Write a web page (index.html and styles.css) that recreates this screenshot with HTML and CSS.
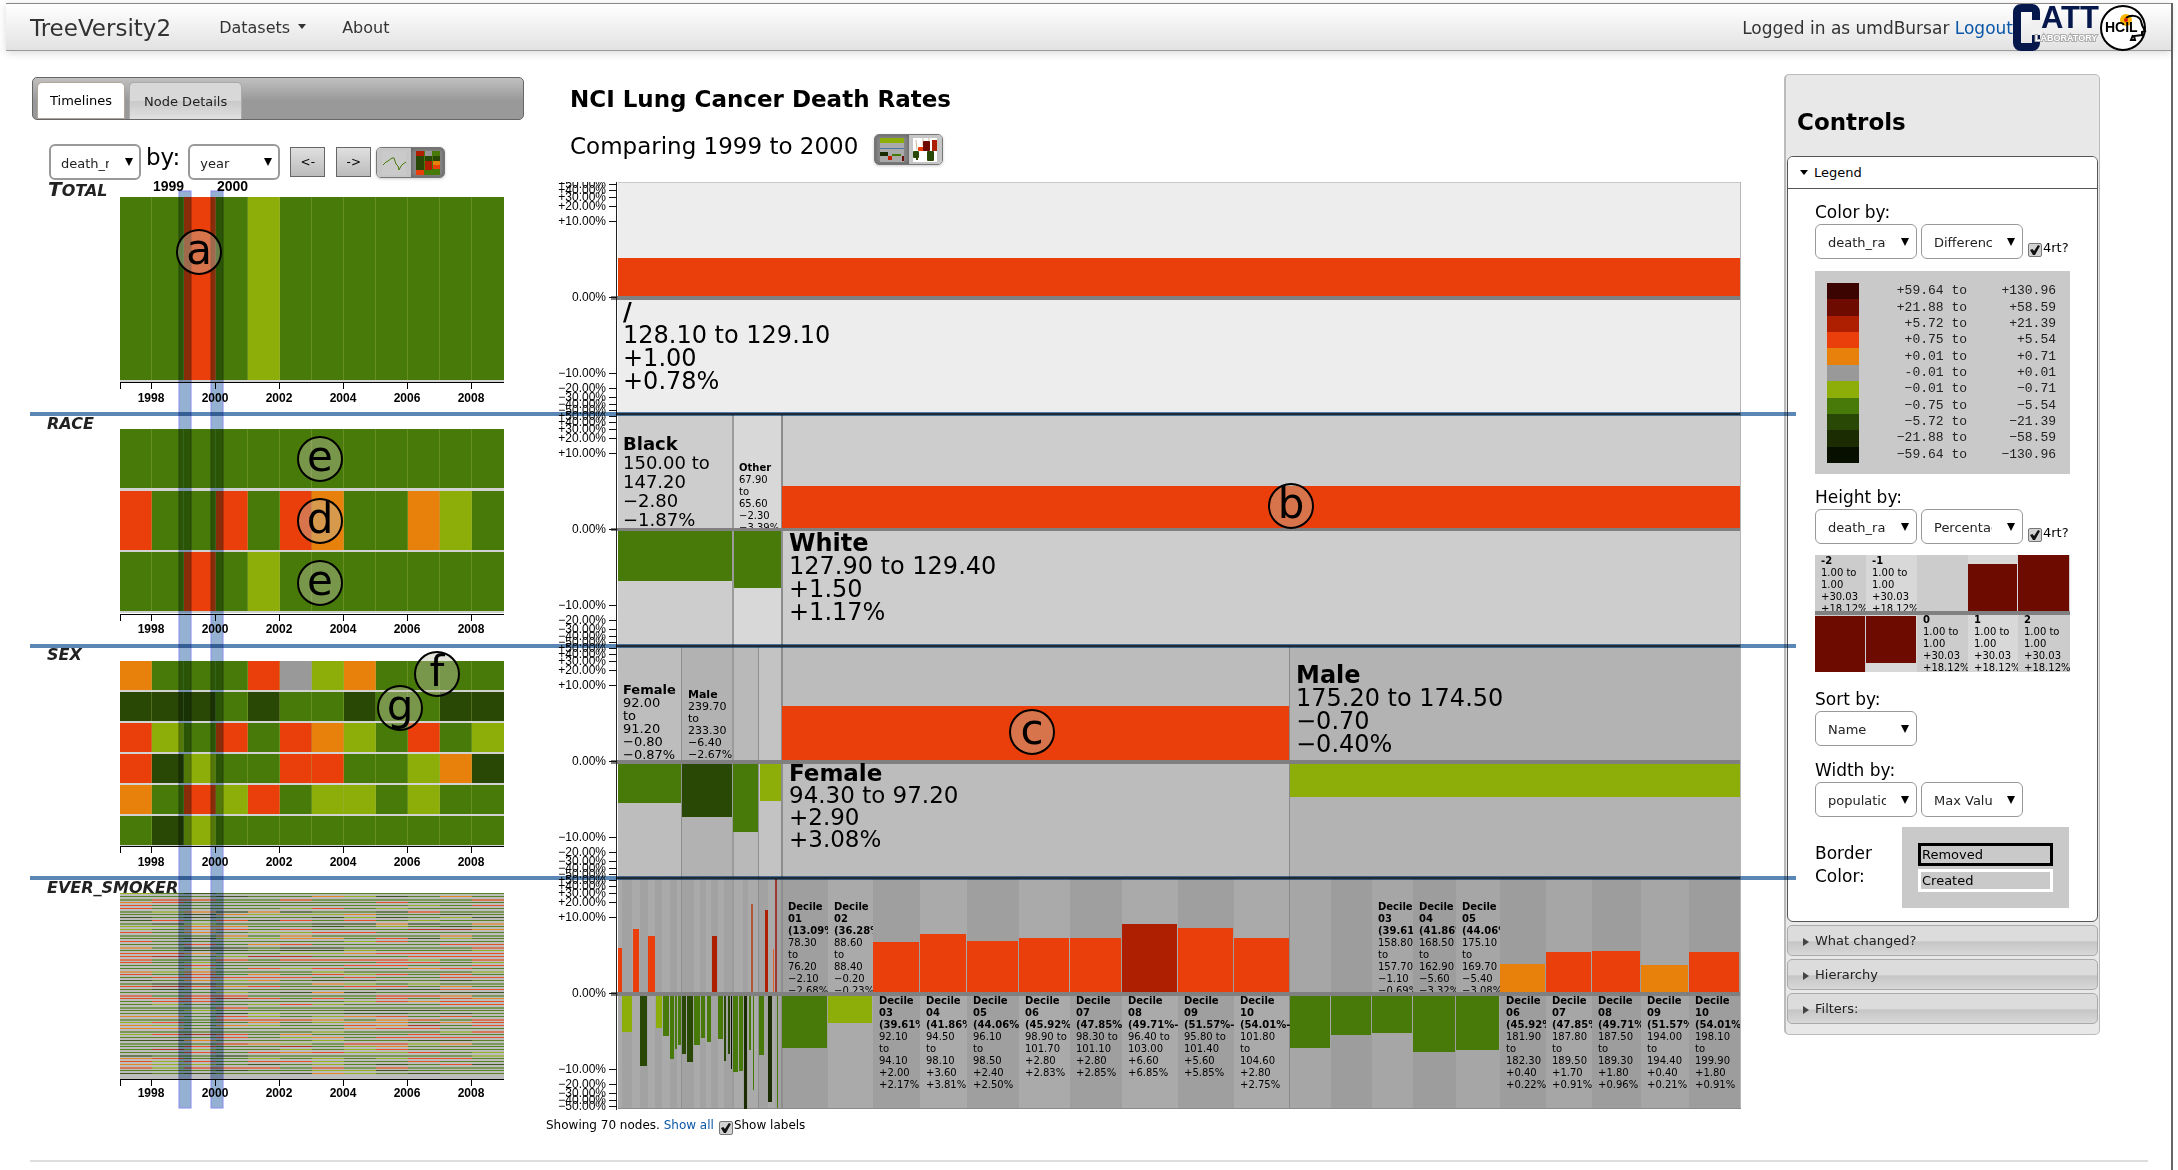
FILE: index.html
```html
<!DOCTYPE html>
<html lang="en">
<head>
<meta charset="utf-8">
<title>TreeVersity2</title>
<link rel="stylesheet" href="styles.css">
</head>
<body>
<div class="page">
  <header class="navbar">
    <a class="brand" href="#">TreeVersity2</a>
    <nav class="nav">
      <a class="nav-link has-caret" href="#">Datasets</a>
      <a class="nav-link" href="#">About</a>
    </nav>
    <p class="session">Logged in as umdBursar <a href="#">Logout</a></p>
    <svg class="logos" width="135" height="48" viewBox="2014 4 135 48" role="img" aria-label="CATT Laboratory and HCIL">
      <rect x="2018" y="8" width="19" height="39" rx="4" fill="none" stroke="#06174c" stroke-width="8"/>
      <rect x="2032" y="20" width="10" height="15" fill="#f0f0f0"/>
      <text class="catt" x="2042" y="28">ATT</text>
      <text class="lab" x="2036" y="41">LABORATORY</text>
      <circle cx="2124" cy="28" r="22" fill="#fff" stroke="#000" stroke-width="2"/>
      <circle cx="2127" cy="20" r="6" fill="#f9b700"/>
      <path d="M2127 18c4-3 11-3 14 1 2 3 1 5 3 8l2 4-3 1v3l-8 1 1 4h-4l2-5" fill="none" stroke="#000" stroke-width="2"/>
      <text class="hcil" x="2106" y="32">HCIL</text>
      <circle cx="2127" cy="20" r="2" fill="#e01a00"/>
    </svg>
  </header>

  <main class="workspace">
    <section class="timelines">
      <div class="tabs">
        <button class="tab is-active" type="button">Timelines</button>
        <button class="tab" type="button">Node Details</button>
      </div>
      <div class="tools">
        <span class="pick pick-92"><select id="measure" aria-label="Measure"><option>death_rate</option></select></span>
        <label class="by" for="period">by:</label>
        <span class="pick pick-92"><select id="period"><option>year</option></select></span>
        <button class="step" type="button">&lt;-</button>
        <button class="step" type="button">-&gt;</button>
        <div class="toggle">
          <button type="button" aria-label="Line view">
            <svg width="24" height="24" viewBox="0 0 24 24"><rect width="24" height="24" fill="#cacaca"/><path d="M1 14l3-3 2-1 4-3h2l2 6 2 2 1 4 2-4 2-2 3-2" fill="none" stroke="#477a08" stroke-width="1"/></svg>
          </button>
          <button class="is-on" type="button" aria-label="Heat map view">
            <svg width="24" height="24" viewBox="0 0 24 24"><rect width="24" height="24" fill="#477a08"/><path d="M0 0h8v5H0zM9 10h7v9H9z" fill="#ae1f02"/><path d="M9 0h7v5H9z" fill="#999"/><path d="M0 5h8v14H0zM9 5h7v5H9zM17 5h7v5h-7z" fill="#294705"/><path d="M17 10h7v4h-7z" fill="#e8800c"/><path d="M17 14h7v4h-7zM0 19h8v5H0z" fill="#ea3f0a"/></svg>
          </button>
        </div>
      </div>
      <svg id="heat" class="chart" viewBox="32 180 492 930" role="img" aria-label="Timelines by group"></svg>
    </section>

    <section class="tree">
      <h1>NCI Lung Cancer Death Rates</h1>
      <div class="compare">
        <h2>Comparing 1999 to 2000</h2>
        <div class="toggle">
          <button class="is-on" type="button" aria-label="Icicle view">
            <svg width="24" height="24" viewBox="0 0 24 24"><rect width="24" height="24" fill="#aaa"/><rect width="24" height="5" fill="#8dae08"/><rect y="10" width="24" height="1" fill="#4a77a8"/><rect y="14" width="8" height="4" fill="#1b2b02"/><rect x="8" y="18" width="4" height="4" fill="#c02000"/><rect x="12" y="16" width="9" height="2" fill="#477a08"/><rect x="22" y="18" width="2" height="5" fill="#6e0b00"/></svg>
          </button>
          <button type="button" aria-label="Bar view">
            <svg width="24" height="24" viewBox="0 0 24 24"><rect width="24" height="24" fill="#fff"/><path d="M3 2l1 10M10 0v8M16 14V0" stroke="#c7bc9a" fill="none"/><rect x="5" y="9" width="7" height="4" rx="1" fill="#ea3f0a"/><rect x="10" y="3" width="7" height="10" rx="1" fill="#6e0b00"/><rect x="19" y="2" width="5" height="11" fill="#ae1f02"/><rect y="13" width="6" height="7" rx="1" fill="#294705"/><rect x="3" y="18" width="2" height="4" fill="#294705"/><rect x="14" y="13" width="7" height="10" rx="1" fill="#294705"/></svg>
          </button>
        </div>
      </div>
      <svg id="icicle" class="chart" viewBox="546 182 1195 928" role="img" aria-label="Change per node"></svg>
      <p class="summary">Showing 70 nodes. <a href="#">Show all</a><input id="labels" type="checkbox" checked><label for="labels">Show labels</label></p>
    </section>

    <aside class="controls">
      <h2>Controls</h2>
      <section class="legend">
        <button class="legend-head" type="button">Legend</button>
        <div class="legend-body">
          <label class="caption" for="color-by">Color by:</label>
          <div class="row">
            <span class="pick"><select id="color-by"><option>death_rate</option></select></span>
            <span class="pick"><select aria-label="Color mode"><option>Difference</option></select></span>
            <input id="rt1" type="checkbox" checked><label class="rt" for="rt1">4rt?</label>
          </div>
          <div class="scale-box"><table class="scale"><tbody id="scale"></tbody></table></div>
          <label class="caption" for="height-by">Height by:</label>
          <div class="row">
            <span class="pick"><select id="height-by"><option>death_rate</option></select></span>
            <span class="pick"><select aria-label="Height mode"><option>Percentage</option></select></span>
            <input id="rt2" type="checkbox" checked><label class="rt" for="rt2">4rt?</label>
          </div>
          <svg id="sample" class="sample" width="255" height="117" viewBox="1815 556 255 117"></svg>
          <label class="caption" for="sort-by">Sort by:</label>
          <div class="row">
            <span class="pick"><select id="sort-by"><option>Name</option></select></span>
          </div>
          <label class="caption width-by" for="width-by">Width by:</label>
          <div class="row">
            <span class="pick"><select id="width-by"><option>population</option></select></span>
            <span class="pick"><select aria-label="Width mode"><option>Max Value</option></select></span>
          </div>
          <div class="border-row">
            <p>Border Color:</p>
            <div class="border-box"><div class="removed">Removed</div><div class="created">Created</div></div>
          </div>
        </div>
      </section>
      <button class="fold" type="button">What changed?</button>
      <button class="fold" type="button">Hierarchy</button>
      <button class="fold" type="button">Filters:</button>
    </aside>

    <div class="guide guide-1"></div>
    <div class="guide guide-2"></div>
    <div class="guide guide-3"></div>
  </main>
  <hr class="rule">
</div>
<script src="charts.js"></script>
</body>
</html>
```
FILE: styles.css
```css
* { box-sizing: border-box; }
body { margin: 0; background: #fff; color: #000; font-family: "DejaVu Sans", Verdana, sans-serif; font-size: 13px; }
h1, h2, p { margin: 0; }
a { color: #0b57a8; text-decoration: none; }
button { font: inherit; color: inherit; margin: 0; padding: 0; }
.page { margin: 3px 5px 0 6px; border-right: 2px solid #666; min-height: 1167px; }

.navbar { display: flex; align-items: flex-start; height: 48px; padding: 0 23px 0 24px; border-top: 1px solid #8b8782; border-bottom: 1px solid #999; background: linear-gradient(#fff, #e2e2e2); box-shadow: 0 2px 8px rgba(0,0,0,.15); }
.brand { color: #333; font-size: 23px; line-height: 48px; }
.nav { display: flex; gap: 36px; margin-left: 48px; }
.nav-link { color: #333; font-size: 16px; line-height: 48px; }
.has-caret::after { content: ""; display: inline-block; margin-left: 8px; vertical-align: 4px; border: 4px solid transparent; border-top: 5px solid #333; border-bottom: 0; }
.session { margin-left: auto; color: #333; font-size: 17px; line-height: 48px; }
.logos { display: block; flex: none; }

.workspace { position: relative; display: grid; grid-template-columns: 492px minmax(0, 1fr) 316px; align-items: start; padding: 0 71px 0 26px; }
.chart { display: block; width: 100%; height: auto; overflow: visible; }

.tabs { display: flex; gap: 4px; margin-top: 26px; height: 43px; padding: 4px 4px 0; border: 1px solid #666; border-radius: 5px; background: linear-gradient(#c0c0c0, #999 55%, #999); }
.tab { border: 1px solid #aaa; border-bottom: 0; border-radius: 5px 5px 0 0; background: linear-gradient(#d8d8d8 50%, #c9c9c9 50%, #e0e0e0); color: #222; padding: 0 14px; }
.tab.is-active { background: #fff; color: #000; border: 1px solid #b0a59a; padding: 0 12px; }
.tools { display: flex; align-items: flex-start; height: 36px; margin-top: 24px; padding-left: 17px; }
.by { font-size: 23px; line-height: 28px; margin: -1px 8px 0 5px; }
.step { width: 35px; height: 30px; margin: 3px 0 0 10px; border: 1px solid #666; background: linear-gradient(#e0e0e0, #bbb); font-size: 12px; }
.step + .step { margin-left: 11px; }
.toggle { display: flex; width: 69px; height: 31px; border: 1px solid #777; border-radius: 5px; box-shadow: 0 1px 3px rgba(0,0,0,.2); overflow: hidden; }
.toggle button { flex: 1; display: grid; place-items: center; border: 0; background: #c6c6c6; }
.toggle .is-on { background: #888; box-shadow: inset 0 0 5px #555; }
.tools .toggle { margin: 3px 0 0 5px; }

.pick { position: relative; display: block; width: 102px; height: 35px; }
.pick-92 { width: 92px; height: 36px; }
.pick select { appearance: none; width: 100%; height: 100%; padding: 2px 30px 0 12px; border: 1px solid #999; border-radius: 6px; background: #fff; color: #222; font: 13px "DejaVu Sans", Verdana, sans-serif; }
.pick-92 select { border-width: 2px; padding-left: 10px; }
.pick::after { content: ""; position: absolute; right: 8px; top: 14px; border: 4px solid transparent; border-top: 8px solid #000; border-bottom: 0; }

input[type="checkbox"] { appearance: none; display: inline-block; width: 14px; height: 14px; margin: 0; border: 1px solid #777; border-radius: 2px; background: #d2d2d2; }
input[type="checkbox"]:checked::after { content: ""; display: block; width: 10px; height: 10px; margin: 1px; background: #111; clip-path: polygon(0 50%, 25% 40%, 40% 60%, 80% 0, 100% 10%, 50% 100%, 30% 100%); }

.tree { padding: 34px 43px 0 22px; }
.tree h1 { font-size: 23px; line-height: 28px; padding-left: 24px; }
.compare { display: flex; align-items: flex-start; height: 33px; margin: 19px 0 17px; padding-left: 24px; }
.compare h2 { font-size: 23px; font-weight: normal; line-height: 28px; width: 304px; white-space: nowrap; }
.compare .toggle { margin-top: 2px; }
.summary { font-size: 12px; line-height: 20px; margin-top: 5px; }
.summary input { margin: 0 1px 0 5px; vertical-align: -6px; }

.controls { margin-top: 23px; padding: 0 1px 10px; border: 1px solid #bbb; border-left-width: 2px; border-radius: 5px; background: #e8e8e8; }
.controls h2 { font-size: 23px; line-height: 28px; padding: 33px 0 20px 10px; }
.legend { border: 1px solid #555; border-radius: 6px; background: #fff; overflow: hidden; }
.legend-head { position: relative; display: block; width: 100%; height: 32px; padding: 0 0 0 26px; border: 0; border-bottom: 1px solid #555; background: #fff; text-align: left; }
.legend-head::before { content: ""; position: absolute; left: 12px; top: 13px; border: 4px solid transparent; border-top: 5px solid #000; border-bottom: 0; }
.legend-body { padding: 13px 27px 12px; height: 732px; }
.caption { display: block; font-size: 17px; line-height: 20px; height: 22px; }
.row { display: flex; gap: 4px; }
.row input { margin: 19px 0 0 1px; flex: none; }
.rt { margin: 15px 0 0 -3px; line-height: 18px; }
.scale-box { width: 255px; height: 203px; margin: 12px 0 13px; padding: 12px 14px 0 12px; background: #c9c9c9; }
.scale { width: 100%; height: 180px; border-collapse: collapse; font: 13px "Liberation Mono", monospace; color: #222; }
.scale td { padding: 0; line-height: 16px; text-align: right; white-space: pre; }
.scale td:first-child { width: 32px; }
.scale td:nth-child(2) { width: 108px; }
.sample { display: block; margin: 11px 0 17px; }
.width-by { margin-top: 14px; }
.border-row { display: flex; justify-content: space-between; width: 254px; margin-top: 10px; }
.border-row p { width: 80px; padding-top: 15px; font-size: 17px; line-height: 23px; }
.border-box { width: 167px; height: 81px; padding: 16px; background: #c9c9c9; }
.border-box div { height: 23px; margin-bottom: 3px; padding-left: 1px; border: 3px solid #000; line-height: 17px; }
.border-box .created { border-color: #fff; }
.fold { position: relative; display: block; width: 100%; height: 31px; margin-top: 3px; padding-left: 27px; border: 1px solid #aaa; border-radius: 5px; background: linear-gradient(#dcdcdc 50%, #c6c6c6 55%, #d8d8d8); color: #222; text-align: left; }
.fold::before { content: ""; position: absolute; left: 15px; top: 12px; border: 4px solid transparent; border-left: 6px solid #444; border-right: 0; }

.guide { position: absolute; left: 24px; right: 375px; height: 4px; background: #5b87b5; mix-blend-mode: multiply; }
.guide-1 { top: 361px; }
.guide-2 { top: 593px; }
.guide-3 { top: 825px; }
.rule { margin: 25px 23px 0 24px; border: 0; border-top: 2px solid #ddd; }

svg text { font-family: "DejaVu Sans", Verdana, sans-serif; }
svg .tick { font: bold 12px "Liberation Sans", Arial, sans-serif; text-anchor: middle; }
svg .year { font: bold 14px "Liberation Sans", Arial, sans-serif; }
svg .pct { font: 12px "Liberation Sans", Arial, sans-serif; text-anchor: end; }
svg .group { font-size: 16px; font-weight: bold; font-style: italic; fill: #222; }
svg .cap { font-size: 20px; }
svg .mark { font-size: 42px; text-anchor: middle; }
svg .brush { mix-blend-mode: multiply; fill: #94b1d1; stroke: #8a8cf0; stroke-width: 1px; }
svg .catt { font: bold 31px "Liberation Sans", sans-serif; fill: #06174c; }
svg .lab { font: bold 9px "Liberation Sans", sans-serif; fill: #fff; stroke: #aaa; stroke-width: 2px; paint-order: stroke; }
svg .hcil { font: bold 14px "Liberation Sans", sans-serif; }
```
FILE: charts.js
```js
const NS = 'http://www.w3.org/2000/svg';
const C = { K: '#071000', V: '#1b2b02', D: '#294705', G: '#477a08', L: '#8dae08', N: '#999999', A: '#e8800c', O: '#ea3f0a', R: '#ae1f02', M: '#6e0b00', X: '#3b0400' };

function add(parent, name, attrs, text) {
  const el = document.createElementNS(NS, name);
  for (const k in attrs) el.setAttribute(k, attrs[k]);
  if (text !== undefined) el.textContent = text;
  parent.appendChild(el);
  return el;
}
function rect(p, x1, y1, x2, y2, fill, more) {
  return add(p, 'rect', Object.assign({ x: x1, y: y1, width: x2 - x1, height: y2 - y1, fill }, more));
}
function mark(p, x, y, ch) {
  add(p, 'circle', { cx: x, cy: y, r: 22, fill: 'rgba(190,190,170,.42)', stroke: '#000', 'stroke-width': 2 });
  add(p, 'text', { x, y: y + 12, class: 'mark' }, ch);
}
/* First line is bold; the text is clipped at the right and bottom edges of its cell. */
function label(p, x, y, size, lead, lines, right, bottom) {
  const s = add(p, 'svg', { x, y: y - size, width: right - x, height: bottom - y + size, overflow: 'hidden' });
  lines.forEach((t, i) => add(s, 'text', { x: 0, y: size + i * lead, 'font-size': size, 'font-weight': t[0] === '*' ? 'bold' : 'normal' }, t.replace('*', '')));
}

/* Timelines */
const heat = document.getElementById('heat');
const CELL = 32, X0 = 120;
function cells(rows, top, pitch, h) {
  rect(heat, X0, top, 504, top + pitch * (rows.length - 1) + h + 2, '#d2d2d2');
  rows.forEach((row, r) => [...row].forEach((k, i) => {
    const y = Math.round(top + r * pitch);
    rect(heat, X0 + i * CELL, y, X0 + (i + 1) * CELL, y + h, C[k]);
    if (i) rect(heat, X0 + i * CELL - 1, y, X0 + i * CELL, y + h, 'rgba(160,180,90,.35)');
  }));
}
function axis(y, base) {
  rect(heat, X0, y, 504, y + 1, '#000');
  rect(heat, X0, y, X0 + 1, y + 7, '#000');
  for (let i = 0; i < 6; i++) {
    const x = 151 + i * 64;
    rect(heat, x, y, x + 1, y + 7, '#000');
    add(heat, 'text', { x: x, y: base, class: 'tick' }, String(1998 + i * 2));
  }
}
cells(['GGOGLGGGGGGG'], 197, 184, 183);
axis(382, 402);
cells(['GGGGGGGGGGGG', 'OGGOGOAGGALG', 'GGOGLGGGGGGG'], 429, 61.5, 59);
axis(614, 633);
cells(['AGGGONLAGGGG', 'DDDGDGGDGGDD', 'OLGOGOALGOGL', 'ODLGGOOGGLAD', 'AGOLOGLLGLGG', 'GDLGGGGGGGGG'], 661, 31, 29);
axis(846, 866);
rect(heat, X0, 893, 504, 1079, '#bdbdbd');
let seed = 7;
const rnd = () => (seed = (seed * 16807) % 2147483647) / 2147483647;
for (let r = 0; r < 61; r++) {
  const wide = r % 4 === 2;
  const lean = rnd();
  for (let i = 0; i < 12; i++) {
    const v = rnd() * .7 + lean * .3;
    const k = v < .2 ? 'D' : v < .6 ? 'G' : v < .67 ? 'L' : v < .73 ? 'A' : v < .93 ? 'O' : 'R';
    rect(heat, X0 + i * CELL, 893 + r * 3, X0 + (i + 1) * CELL, 893 + r * 3 + (wide ? 2 : 1), C[k], { 'fill-opacity': wide ? .55 : .85 });
  }
}
axis(1079, 1097);
const total = add(heat, 'text', { x: 48, y: 196, class: 'group' });
add(total, 'tspan', { class: 'cap' }, 'T');
add(total, 'tspan', {}, 'OTAL');
add(heat, 'text', { x: 47, y: 429, class: 'group' }, 'RACE');
add(heat, 'text', { x: 47, y: 660, class: 'group' }, 'SEX');
add(heat, 'text', { x: 47, y: 893, class: 'group' }, 'EVER_SMOKER');
add(heat, 'text', { x: 153, y: 191, class: 'year' }, '1999');
add(heat, 'text', { x: 217, y: 191, class: 'year' }, '2000');
add(heat, 'rect', { x: 179, y: 191, width: 12, height: 917, class: 'brush' });
add(heat, 'rect', { x: 211, y: 191, width: 12, height: 917, class: 'brush' });
mark(heat, 199, 252, 'a');
mark(heat, 320, 459, 'e');
mark(heat, 320, 521, 'd');
mark(heat, 320, 583, 'e');
mark(heat, 437, 674, 'f');
mark(heat, 400, 708, 'g');

/* Icicle */
const ice = document.getElementById('icicle');
rect(ice, 618, 182, 1740, 414, '#ededed');
[[618, 733, '#cdcdcd'], [733, 782, '#d8d8d8'], [782, 1740, '#cdcdcd']].forEach(c => rect(ice, c[0], 414, c[1], 646, c[2]));
[[618, 682, '#bdbdbd'], [682, 733, '#b2b2b2'], [733, 759, '#b9b9b9'], [759, 782, '#c3c3c3'], [782, 1290, '#bcbcbc'], [1290, 1740, '#b3b3b3']].forEach(c => rect(ice, c[0], 646, c[1], 878, c[2]));

const small = [618, 622, 632, 640, 648, 655, 662, 670, 677, 682, 694, 700, 706, 711, 718, 724, 733, 743, 748, 759, 768, 775, 782];
for (let i = 0; i < small.length - 1; i++) rect(ice, small[i], 878, small[i + 1], 1109, i % 2 ? '#a2a2a2' : '#aaaaaa');
const female = [782, 828, 873, 920, 967, 1019, 1070, 1122, 1178, 1234, 1290];
const male = [1290, 1331, 1372, 1413, 1456, 1500, 1546, 1592, 1641, 1689, 1740];
for (let i = 0; i < 10; i++) {
  rect(ice, female[i], 878, female[i + 1], 1109, i % 2 ? '#aaaaaa' : '#9f9f9f');
  rect(ice, male[i], 878, male[i + 1], 1109, i % 2 ? '#9d9d9d' : '#a6a6a6');
}
[[733, 414, 1109, 2, '#9b9b9b'], [782, 414, 1109, 2, '#8d8d8d'], [682, 646, 1109, 1, '#8f8f8f'], [759, 646, 1109, 1, '#8f8f8f'], [1290, 646, 1109, 1, '#8a8a8a']].forEach(s => rect(ice, s[0] - 1, s[1], s[0] - 1 + s[3], s[2], s[4]));
rect(ice, 618, 182, 1741, 183, '#c9c9c9');
rect(ice, 1740, 182, 1741, 1109, '#b5b5b5');
rect(ice, 618, 1108, 1741, 1109, '#8a8a8a');

[
  [618, 1740, 258, 296, 'O'],
  [782, 1740, 486, 528, 'O'], [618, 732, 531, 581, 'G'], [734, 781, 531, 588, 'G'],
  [782, 1289, 706, 760, 'O'], [1290, 1740, 763, 797, 'L'], [618, 681, 763, 803, 'G'], [682, 732, 763, 817, 'D'], [733, 758, 763, 832, 'G'], [760, 781, 763, 801, 'L'],
  [618, 622, 948, 992, 'O'], [633, 639, 929, 992, 'O'], [648, 655, 936, 992, 'O'], [712, 717, 936, 992, 'R'], [765, 768, 910, 992, 'R'],
  [622, 632, 996, 1032, 'L'], [640, 647, 996, 1066, 'D'], [656, 662, 996, 1028, 'L'], [663, 669, 996, 1036, 'G'], [670, 674, 996, 1059, 'G'],
  [675, 677, 996, 1049, 'G'], [678, 681, 996, 1045, 'G'], [682, 686, 996, 1054, 'D'], [687, 693, 996, 1062, 'D'], [694, 700, 996, 1045, 'G'],
  [701, 705, 996, 1038, 'G'], [707, 711, 996, 1042, 'G'], [718, 723, 996, 1039, 'G'], [724, 726, 996, 1061, 'D'], [728, 730, 996, 1054, 'D'],
  [731, 732, 996, 1069, 'K'], [733, 738, 996, 1072, 'G'], [739, 743, 996, 1071, 'G'], [744, 747, 996, 1109, 'V'], [749, 751, 996, 1050, 'G'],
  [753, 754, 996, 1090, 'G'], [759, 764, 996, 1055, 'G'], [768, 772, 996, 1102, 'V'], [777, 778, 996, 1108, 'G']
].forEach(b => rect(ice, b[0], b[2], b[1], b[3], C[b[4]]));
rect(ice, 751, 904, 753, 992, '#b0563a');
rect(ice, 773, 949, 774, 992, '#e06030');
rect(ice, 775, 879, 777, 992, '#9c3a30');

const fBars = [['G', 1048], ['L', 1023], ['O', 942], ['O', 934], ['O', 941], ['O', 938], ['O', 938], ['R', 924], ['O', 928], ['O', 938]];
const mBars = [['G', 1048], ['G', 1035], ['G', 1033], ['G', 1052], ['G', 1050], ['A', 964], ['O', 952], ['O', 951], ['A', 965], ['O', 952]];
[[female, fBars], [male, mBars]].forEach(([xs, bars]) => bars.forEach(([k, y], i) =>
  y > 994 ? rect(ice, xs[i], 996, xs[i + 1] - 1, y, C[k]) : rect(ice, xs[i], y, xs[i + 1] - 1, 992, C[k])));

[[296, 300], [528, 531], [760, 764], [992, 996]].forEach(z => rect(ice, 611, z[0], 1740, z[1], '#808080'));
[413, 645, 877].forEach(y => rect(ice, 617, y, 1740, y + 2, '#505050'));

const axisBox = add(ice, 'svg', { x: 546, y: 182, width: 80, height: 928, viewBox: '546 182 80 928', overflow: 'hidden' });
rect(axisBox, 616, 182, 617, 1110, '#222');
[297, 529, 761, 993].forEach(z => [0, 76, 91, 100, 107, 113].forEach((d, i) => [-1, 1].forEach(s => {
  if (!i && s > 0) return;
  const y = z + s * d;
  rect(axisBox, 609, y, 617, y + 1, '#111');
  add(axisBox, 'text', { x: 606, y: y + 4, class: 'pct' }, (i ? (s < 0 ? '+' : '−') + i * 10 : '0') + '.00%');
})));

label(ice, 623, 320, 24, 23, ['*/', '128.10 to 129.10', '+1.00', '+0.78%'], 1700, 412);
label(ice, 623, 450, 18, 19, ['*Black', '150.00 to', '147.20', '−2.80', '−1.87%'], 733, 528);
label(ice, 739, 471, 10, 12, ['*Other', '67.90', 'to', '65.60', '−2.30', '−3.39%'], 781, 528);
label(ice, 789, 551, 24, 23, ['*White', '127.90 to 129.40', '+1.50', '+1.17%'], 1700, 640);
label(ice, 623, 694, 13, 13, ['*Female', '92.00', 'to', '91.20', '−0.80', '−0.87%'], 682, 760);
label(ice, 688, 698, 11, 12, ['*Male', '239.70', 'to', '233.30', '−6.40', '−2.67%'], 733, 760);
label(ice, 789, 781, 23, 22, ['*Female', '94.30 to 97.20', '+2.90', '+3.08%'], 1280, 870);
label(ice, 1296, 683, 24, 23, ['*Male', '175.20 to 174.50', '−0.70', '−0.40%'], 1735, 760);

const up = (x, r, lines) => label(ice, x + 6, 910, 10, 12, lines, r, 992);
const down = (x, r, lines) => label(ice, x + 6, 1004, 10, 12, lines, r, 1109);
up(782, 828, ['*Decile', '*01', '*(13.09%-', '78.30', 'to', '76.20', '−2.10', '−2.68%']);
up(828, 873, ['*Decile', '*02', '*(36.28%-', '88.60', 'to', '88.40', '−0.20', '−0.23%']);
[
  ['03', '39.61', '92.10', 'to', '94.10', '+2.00', '+2.17%'],
  ['04', '41.86', '94.50', 'to', '98.10', '+3.60', '+3.81%'],
  ['05', '44.06', '96.10', 'to', '98.50', '+2.40', '+2.50%'],
  ['06', '45.92', '98.90 to', '101.70', '+2.80', '+2.83%'],
  ['07', '47.85', '98.30 to', '101.10', '+2.80', '+2.85%'],
  ['08', '49.71', '96.40 to', '103.00', '+6.60', '+6.85%'],
  ['09', '51.57', '95.80 to', '101.40', '+5.60', '+5.85%'],
  ['10', '54.01', '101.80', 'to', '104.60', '+2.80', '+2.75%']
].forEach((d, i) => down(female[i + 2], female[i + 3], ['*Decile', '*' + d[0], '*(' + d[1] + '%-', ...d.slice(2)]));
[
  ['03', '39.61', '158.80', 'to', '157.70', '−1.10', '−0.69%'],
  ['04', '41.86', '168.50', 'to', '162.90', '−5.60', '−3.32%'],
  ['05', '44.06', '175.10', 'to', '169.70', '−5.40', '−3.08%']
].forEach((d, i) => up(male[i + 2], male[i + 3], ['*Decile', '*' + d[0], '*(' + d[1] + '%-', ...d.slice(2)]));
[
  ['06', '45.92', '181.90', 'to', '182.30', '+0.40', '+0.22%'],
  ['07', '47.85', '187.80', 'to', '189.50', '+1.70', '+0.91%'],
  ['08', '49.71', '187.50', 'to', '189.30', '+1.80', '+0.96%'],
  ['09', '51.57', '194.00', 'to', '194.40', '+0.40', '+0.21%'],
  ['10', '54.01', '198.10', 'to', '199.90', '+1.80', '+0.91%']
].forEach((d, i) => down(male[i + 5], male[i + 6], ['*Decile', '*' + d[0], '*(' + d[1] + '%-', ...d.slice(2)]));
mark(ice, 1291, 506, 'b');
mark(ice, 1032, 732, 'c');

/* Legend scale */
document.getElementById('scale').innerHTML = [
  ['X', '+59.64', '+130.96'], ['M', '+21.88', '+58.59'], ['R', '+5.72', '+21.39'], ['O', '+0.75', '+5.54'], ['A', '+0.01', '+0.71'], ['N', '-0.01', '+0.01'],
  ['L', '−0.01', '−0.71'], ['G', '−0.75', '−5.54'], ['D', '−5.72', '−21.39'], ['V', '−21.88', '−58.59'], ['K', '−59.64', '−130.96']
].map(r => `<tr><td style="background:${C[r[0]]}"></td><td>${r[1]} to</td><td>${r[2]}</td></tr>`).join('');

/* Height sample */
const sample = document.getElementById('sample');
const sx = [1815, 1866, 1917, 1968, 2018, 2070];
for (let i = 0; i < 5; i++) rect(sample, sx[i], 556, sx[i + 1], 673, i % 2 ? '#d8d8d8' : '#cccccc');
[[0, 617, 673], [1, 617, 664], [3, 565, 612], [4, 556, 612]].forEach(b => rect(sample, sx[b[0]], b[1], sx[b[0] + 1] - 1, b[2], C.M));
rect(sample, 1815, 612, 2070, 616, '#808080');
['-2', '-1', '0', '1', '2'].forEach((n, i) =>
  label(sample, sx[i] + 6, i < 2 ? 565 : 624, 10, 12, ['*' + n, '1.00 to', '1.00', '+30.03', '+18.12%'], sx[i + 1], i < 2 ? 612 : 673));
```
